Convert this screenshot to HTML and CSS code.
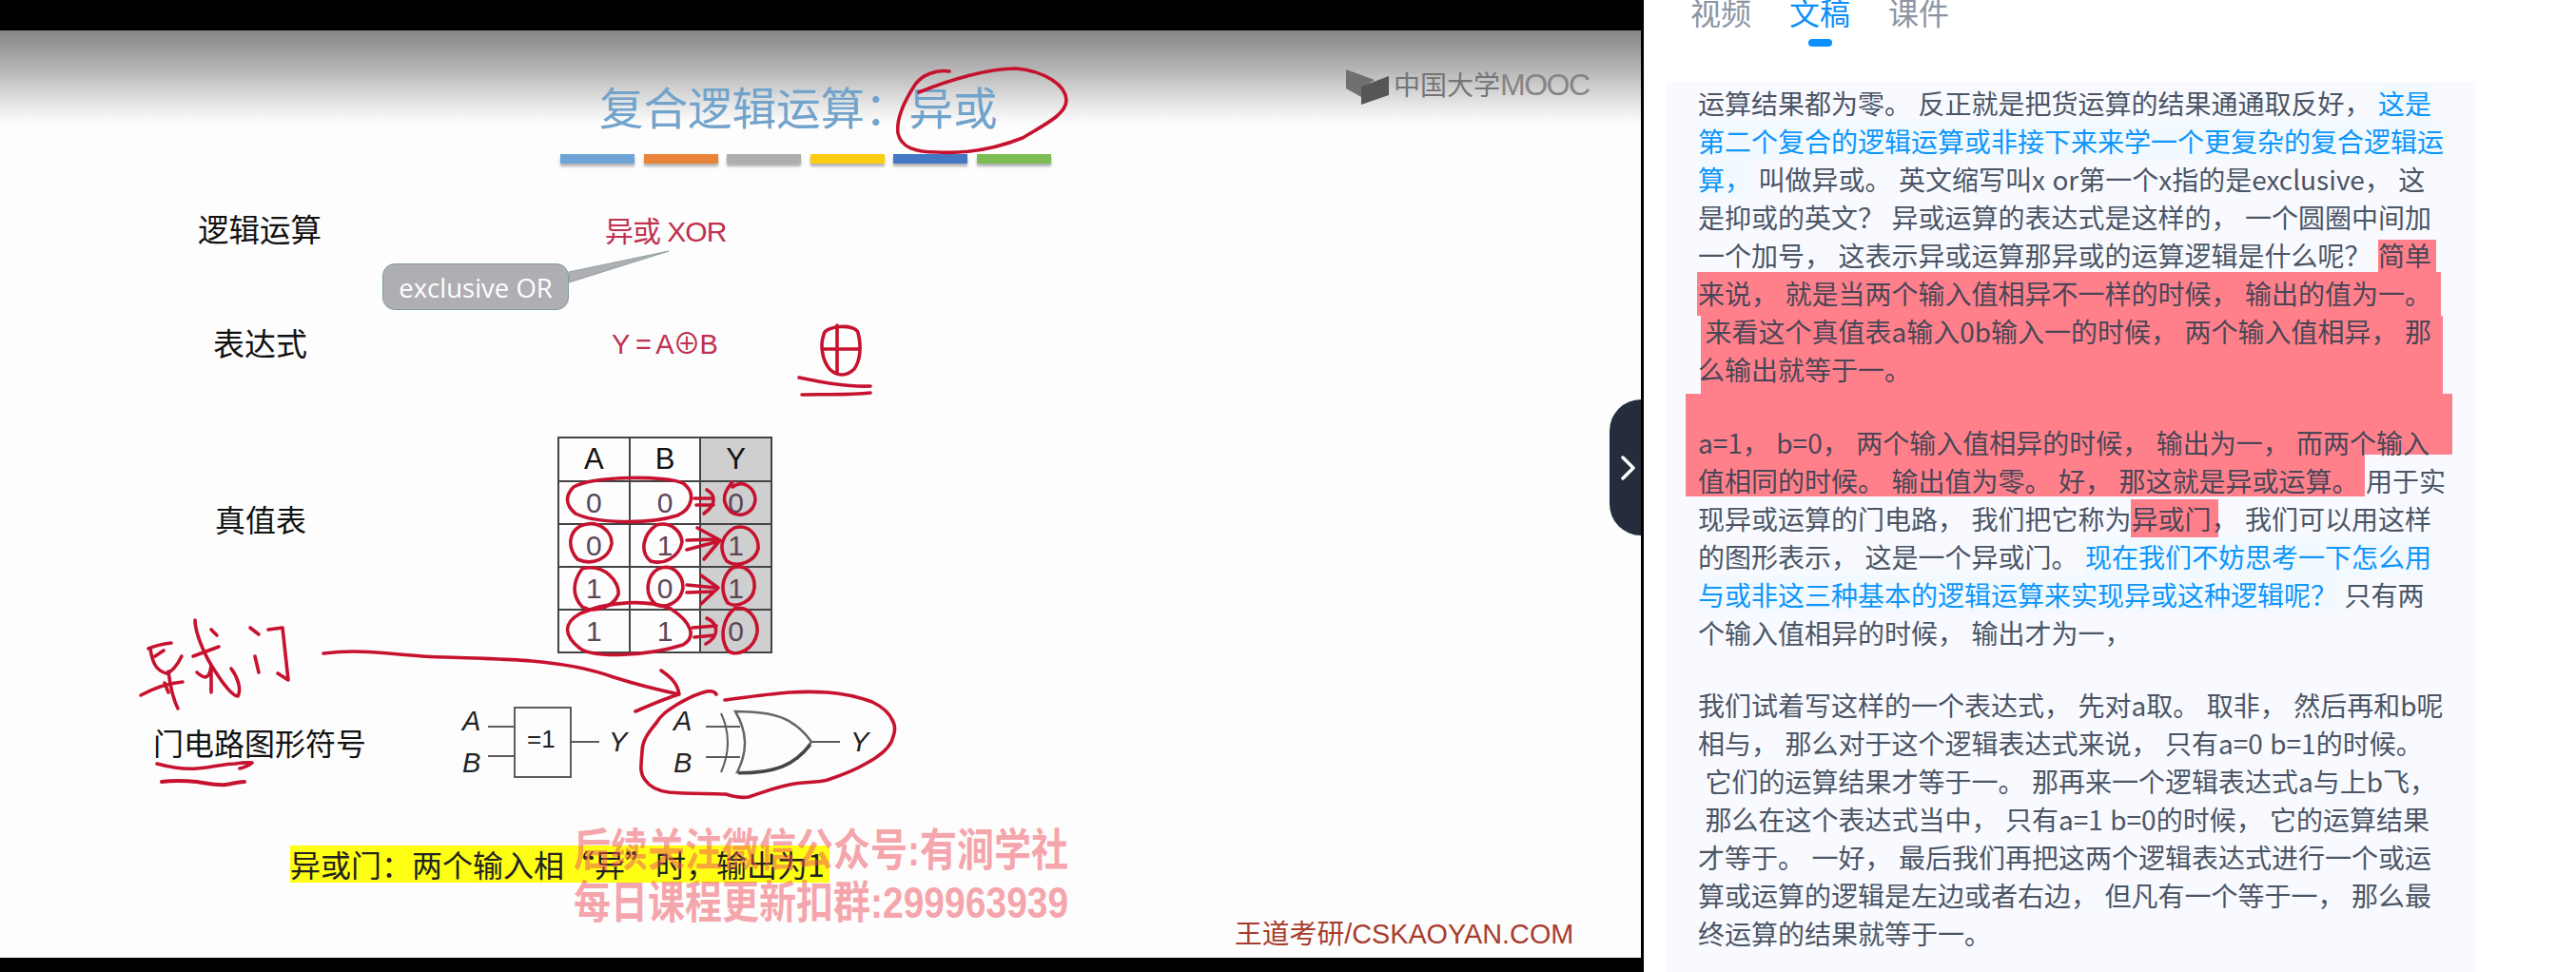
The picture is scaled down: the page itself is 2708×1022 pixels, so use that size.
FILE: index.html
```html
<!DOCTYPE html>
<html lang="zh-CN">
<head>
<meta charset="utf-8">
<title>复合逻辑运算：异或</title>
<link rel="stylesheet" href="styles.css">
</head>
<body>
<div class="app">
  <section class="video">
    <div class="slide"></div>
    <div class="title">复合逻辑运算：异或</div>
    <div class="bars"><i class="b1"></i><i class="b2"></i><i class="b3"></i><i class="b4"></i><i class="b5"></i><i class="b6"></i></div>
    <div class="mooc">
      <svg class="mooc-icon" viewBox="0 0 46 38"><path class="mooc-l" d="M0 0L30 11 16 20V29L0 20Z"/><path class="mooc-r" d="M16 18L45 7V27L16 37Z"/></svg>
      <span>中国大学<b>MOOC</b></span>
    </div>
    <div class="label l-op">逻辑运算</div>
    <div class="red r-op">异或 XOR</div>
    <div class="callout">exclusive OR</div>
    <div class="label l-ex">表达式</div>
    <div class="red r-ex">Y = A⊕B</div>
    <div class="label l-tt">真值表</div>
    <table class="truth">
      <tr class="head"><th>A</th><th>B</th><th class="y">Y</th></tr>
      <tr><td>0</td><td>0</td><td class="y">0</td></tr>
      <tr><td>0</td><td>1</td><td class="y">1</td></tr>
      <tr><td>1</td><td>0</td><td class="y">1</td></tr>
      <tr><td>1</td><td>1</td><td class="y">0</td></tr>
    </table>
    <div class="label l-gate">门电路图形符号</div>
    <div class="note">异或门：两个输入相“异”时，输出为1</div>
    <svg class="canvas" viewBox="0 0 1728 1022">
      <g class="gate">
        <path class="tail" d="M598 286L703 264 598 297Z"/>
        <rect x="541" y="744" width="59" height="73"/>
        <path d="M513 764H541M513 795H541M600 780H630"/>
        <path d="M742 764H778M742 796H778M853 780H883M758 750Q772 780 758 812"/>
        <path class="or" d="M773 748C815 748 835 755 853 780 835 805 815 812 775 812 786 790 786 770 773 748Z"/>
        <path class="or-shade" d="M776 813C815 813 835 805 852 783"/>
        <text x="486" y="768">A</text><text x="486" y="812">B</text><text x="640" y="790">Y</text>
        <text class="one" x="554" y="786">=1</text>
        <text x="708" y="768">A</text><text x="708" y="812">B</text><text x="894" y="790">Y</text>
      </g>
      <g class="ink">
        <path d="M998 75C985 73 968 78 960 92 950 108 942 125 944 140 947 155 962 160 985 160 1020 162 1050 155 1075 145 1100 130 1121 120 1121 105 1120 90 1100 75 1068 72 1040 72 1000 83 966 97"/>
        <path d="M866 352C866 342 900 340 902 350 906 365 904 380 898 388 890 396 880 396 872 388 864 378 862 362 866 352ZM864 367H903M880 342V393"/>
        <path d="M840 397C865 402 890 407 915 406M843 415C865 414 890 416 915 413"/>
        <path d="M603 512C625 500 700 500 718 508 732 518 728 535 712 542 680 552 625 550 605 540 593 530 595 520 603 512Z"/>
        <path d="M770 512C782 503 794 514 794 526 792 540 778 545 768 538 758 528 760 518 770 507"/>
        <path d="M610 553C630 545 644 560 643 572 640 588 622 595 607 588 596 575 598 560 610 553ZM690 552C705 548 716 558 717 570 714 586 698 594 684 590 672 580 676 562 690 552ZM772 555C788 550 798 565 797 577 794 590 776 598 764 590 754 575 760 562 772 555Z"/>
        <path d="M612 598C635 592 652 612 650 625 645 638 625 645 612 638 600 625 603 610 612 598ZM692 598C708 592 718 605 718 618 716 632 702 640 690 636 676 625 680 605 692 598ZM770 597C785 592 794 605 793 618 792 632 775 640 765 634 756 620 760 605 770 597Z"/>
        <path d="M610 645C640 632 680 630 705 640 728 655 732 670 718 678 680 690 625 692 610 682 592 668 592 655 610 645ZM772 640C788 636 797 652 796 665 793 682 775 692 765 684 756 670 760 650 772 640Z"/>
        <path d="M730 524H750M732 531H750M743 515C752 520 754 530 740 540"/>
        <path d="M722 568L755 567M722 578L752 570M733 555L757 568 740 588"/>
        <path d="M722 615L753 618M722 623L750 622M737 605L755 618 737 635"/>
        <path d="M728 660L753 658M730 670L750 668M743 650C754 655 758 668 742 677"/>
        <path d="M156 682C165 678 172 677 180 676M158 682C160 695 163 705 175 708 182 706 187 698 191 690M163 690L172 684M148 731C165 722 178 718 192 717M177 706C179 722 182 735 187 745M173 718L177 728"/>
        <path d="M205 652C205 665 215 690 227 707 235 720 245 732 250 732 254 725 250 712 243 703M203 690L230 680M207 707C215 714 220 715 222 700M222 700V728M222 662L228 668"/>
        <path d="M263 660L272 667M268 690L272 707M282 662L297 660 303 715 292 708"/>
        <path d="M340 687C380 682 410 688 444 690 480 692 525 692 559 695 595 698 620 703 645 712 670 720 695 726 714 730M695 705C705 712 712 718 714 730 700 734 682 742 668 748"/>
        <path d="M753 730C750 725 745 727 743 727 730 730 722 735 713 740 700 748 695 752 690 760 680 772 675 780 675 790 674 805 672 812 678 820 685 830 695 832 703 833 725 835 745 834 763 835 772 838 780 839 787 838 805 832 815 828 830 825 845 822 860 823 870 820 885 815 898 810 910 803 925 795 933 788 937 780 941 770 942 764 938 757 934 748 925 742 917 738 900 732 885 729 870 728 855 727 845 727 830 728 805 730 785 733 762 736"/>
        <path d="M165 803C180 807 195 809 207 808 225 807 235 803 247 803 255 802 262 801 265 802 262 805 256 807 252 808"/>
        <path class="thick" d="M170 822C185 820 197 821 207 822 220 824 230 826 237 825 245 824 250 822 257 822"/>
      </g>
    </svg>
    <div class="mark">后续关注微信公众号:有涧学社<br>每日课程更新扣群:299963939</div>
    <div class="brand">王道考研/CSKAOYAN.COM</div>
  </section>

  <button class="toggle" type="button" aria-label="收起">
    <svg viewBox="0 0 16 26"><path d="M2 2L13 13 2 24"/></svg>
  </button>

  <aside class="side">
    <nav class="tabs">
      <div class="tab">视频</div>
      <div class="tab tab-on">文稿<i></i></div>
      <div class="tab">课件</div>
    </nav>
    <div class="panel">
      <svg class="pink" viewBox="0 0 851 936">
        <rect x="748" y="166" width="61" height="34"/>
        <rect x="32" y="200" width="782" height="46"/>
        <rect x="36" y="246" width="780" height="82"/>
        <rect x="20" y="328" width="806" height="64"/>
        <rect x="20" y="392" width="714" height="44"/>
      </svg>
      <p class="transcript">运算结果都为零。 反正就是把货运算的结果通通取反好， <span class="blue">这是第二个复合的逻辑运算或非接下来来学一个更复杂的复合逻辑运算，</span> 叫做异或。 英文缩写叫x or第一个x指的是exclusive， 这是抑或的英文？ 异或运算的表达式是这样的， 一个圆圈中间加一个加号， 这表示异或运算那异或的运算逻辑是什么呢？ <span class="dark">简单来说， 就是当两个输入值相异不一样的时候， 输出的值为一。<br>&nbsp;来看这个真值表a输入0b输入一的时候， 两个输入值相异， 那么输出就等于一。<span class="gap"></span>a=1， b=0， 两个输入值相异的时候， 输出为一， 而两个输入值相同的时候。 输出值为零。 好， 那这就是异或运算。</span> 用于实现异或运算的门电路， 我们把它称为<span class="pinkword">异或门，</span> 我们可以用这样的图形表示， 这是一个异或门。 <span class="blue">现在我们不妨思考一下怎么用与或非这三种基本的逻辑运算来实现异或这种逻辑呢？</span> 只有两个输入值相异的时候， 输出才为一，<span class="gap"></span>我们试着写这样的一个表达式， 先对a取。 取非， 然后再和b呢相与， 那么对于这个逻辑表达式来说， 只有a=0 b=1的时候。<br>&nbsp;它们的运算结果才等于一。 那再来一个逻辑表达式a与上b飞，<br>&nbsp;那么在这个表达式当中， 只有a=1 b=0的时候， 它的运算结果才等于。 一好， 最后我们再把这两个逻辑表达式进行一个或运算或运算的逻辑是左边或者右边， 但凡有一个等于一， 那么最终运算的结果就等于一。</p>
    </div>
  </aside>
</div>
</body>
</html>
```

FILE: styles.css
```css
* { box-sizing: border-box; }
html, body { margin: 0; height: 100%; overflow: hidden; background: #fff; }
body { font-family: "Noto Sans CJK SC", "Liberation Sans", sans-serif; }

.app { display: flex; width: 2708px; height: 1022px; position: relative; overflow: hidden; }

/* video frame: a free canvas, everything on it is placed by coordinate */
.video { position: relative; flex: 0 0 1728px; height: 1022px; background: #000; overflow: hidden; }
.slide { position: absolute; left: 0; top: 32px; width: 1725px; height: 975px; background: linear-gradient(#868686 0, #b4b4b4 40px, #e6e6e6 78px, #fdfdfd 98px); }
.canvas { position: absolute; left: 0; top: 0; width: 1728px; height: 1022px; }

.title { position: absolute; left: 630px; top: 88px; font-size: 46.5px; line-height: 1; color: #72a3cb; white-space: nowrap; }
.bars { position: absolute; left: 589px; top: 162px; width: 516px; display: flex; justify-content: space-between; }
.bars i { display: block; width: 78px; height: 10px; box-shadow: 0 3px 3px rgba(0,0,0,.3); }
.b1 { background: #6fa5d6; }
.b2 { background: #e8853a; }
.b3 { background: #adadad; }
.b4 { background: #fccc10; }
.b5 { background: #4478c4; }
.b6 { background: #7dbd55; }

.mooc { position: absolute; left: 1415px; top: 73px; display: flex; align-items: center; gap: 4px; color: #757575; font-size: 28px; line-height: 1; white-space: nowrap; }
.mooc span { position: relative; top: -3px; }
.mooc b { font-family: "Liberation Sans", sans-serif; font-weight: 400; font-size: 32px; letter-spacing: -1.5px; color: #858585; }
.mooc-icon { width: 46px; height: 38px; }
.mooc-l { fill: #707070; }
.mooc-r { fill: #565656; }

.label { position: absolute; font-size: 33px; line-height: 1; color: #111; white-space: nowrap; }
.l-op { left: 208px; top: 224px; font-size: 32.5px; }
.l-ex { left: 224px; top: 344px; }
.l-tt { left: 226px; top: 529px; font-size: 32px; }
.l-gate { left: 161px; top: 764px; font-size: 32px; }

.red { position: absolute; color: #c0304f; line-height: 1; white-space: nowrap; font-family: "Liberation Sans", "Noto Sans CJK SC", sans-serif; }
.r-op { left: 636px; top: 229px; font-size: 30px; letter-spacing: -1px; }
.r-ex { left: 643px; top: 348px; font-size: 29px; letter-spacing: -1px; }

.callout { position: absolute; left: 402px; top: 277px; width: 196px; height: 49px; border: 1px solid #7f9a9e; border-radius: 13px; background: #aeaeb3; color: #fff; font-family: "Open Sans", sans-serif; font-size: 27.5px; line-height: 49px; text-align: center; white-space: nowrap; }

.truth { position: absolute; left: 586px; top: 459px; width: 226px; height: 225px; border-collapse: collapse; table-layout: fixed; font-family: "Liberation Sans", sans-serif; }
.truth th, .truth td { border: 2px solid #444; padding: 0; text-align: center; }
.truth th { font-size: 31px; font-weight: 400; color: #111; height: 46px; }
.truth td { font-size: 30px; color: #5c4658; height: 45px; }
.truth .y { background: #cfcfcf; }

.gate { fill: none; stroke: #5c5c5c; stroke-width: 2; }
.gate .tail { fill: #aeaeb3; stroke: #8ea0a4; stroke-width: 1; }
.gate .or { stroke: #666; stroke-width: 2.5; }
.gate .or-shade { stroke: #444; stroke-width: 3; }
.gate text { font-family: "Liberation Sans", sans-serif; font-style: italic; font-size: 29px; fill: #222; stroke: none; }
.gate .one { font-style: normal; font-size: 26px; }

.ink { fill: none; stroke: #c6122f; stroke-width: 3.6; stroke-linecap: round; stroke-linejoin: round; }
.ink .thick { stroke-width: 4; }

.note { position: absolute; left: 305px; top: 889px; width: 567px; height: 39px; background: #ffff14; color: #222; font-size: 32px; line-height: 39px; white-space: nowrap; }
.mark { position: absolute; left: 603px; top: 867px; font-family: "Liberation Sans", "Noto Sans CJK SC", sans-serif; font-weight: 700; font-size: 39px; line-height: 46px; color: rgba(238, 80, 92, .52); white-space: nowrap; transform: scaleY(1.2); transform-origin: 0 0; }
.brand { position: absolute; left: 1298px; top: 968px; font-family: "Liberation Sans", "Noto Sans CJK SC", sans-serif; font-size: 28.8px; line-height: 1; color: #a83c2c; white-space: nowrap; }

.toggle { position: absolute; left: 1692px; top: 420px; width: 33px; height: 143px; padding: 0; border: 0; border-radius: 33px 0 0 33px; background: #252d3c; display: flex; align-items: center; justify-content: center; }
.toggle svg { width: 16px; height: 26px; fill: none; stroke: #fff; stroke-width: 3.5; stroke-linecap: round; stroke-linejoin: round; position: relative; left: 3px; }

.side { flex: 1; display: flex; flex-direction: column; min-width: 0; background: #fff; }
.tabs { display: flex; gap: 40px; margin-top: -3px; padding-left: 49px; height: 89px; flex: none; }
.tab { display: flex; flex-direction: column; align-items: center; font-size: 32px; line-height: 30px; color: #8a94a3; }
.tab-on { color: #0b8ffb; }
.tab-on i { display: block; width: 25px; height: 8px; margin-top: 14px; border-radius: 4px; background: #0b8ffb; }

.panel { position: relative; flex: 1; width: 851px; margin-left: 24px; padding: 2px 0 0 33px; background: #f8faff; overflow: hidden; }
.pink { position: absolute; left: 0; top: 0; width: 851px; height: 936px; fill: #ff808a; }
.transcript { position: relative; width: 790px; margin: 0; font-size: 28px; line-height: 40px; word-spacing: 1.2px; color: #4b5565; }
.blue { color: #0d96fb; background: #f2f9ff; }
.dark { color: #4a4657; }
.pinkword { color: #4a4657; background: linear-gradient(#ff808a, #ff808a) no-repeat; background-size: 92px 100%; }
.gap { display: block; height: 36.5px; }
```
